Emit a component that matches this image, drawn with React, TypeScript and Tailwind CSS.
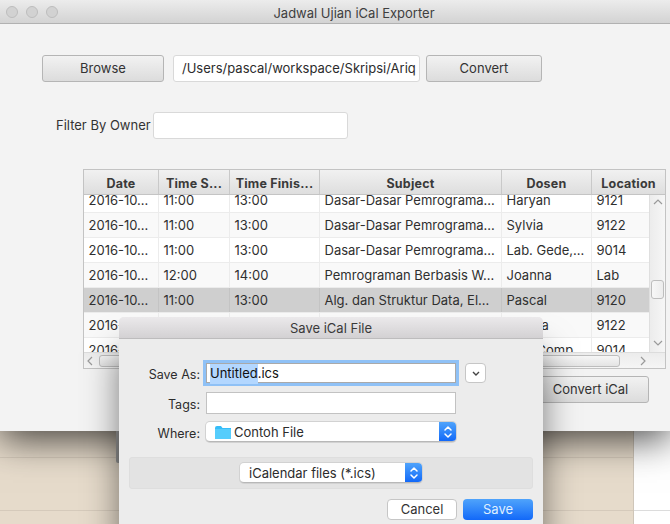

const font = "font-['Inter','Liberation_Sans',sans-serif]";

type Row = { c: string[]; cls: string };
const rows: Row[] = [
  { c: ["2016-10...", "11:00", "13:00", "Dasar-Dasar Pemrograma...", "Haryan", "9121"], cls: "bg-white" },
  { c: ["2016-10...", "11:00", "13:00", "Dasar-Dasar Pemrograma...", "Sylvia", "9122"], cls: "bg-[#f9f9f9]" },
  { c: ["2016-10...", "11:00", "13:00", "Dasar-Dasar Pemrograma...", "Lab. Gede,...", "9014"], cls: "bg-white" },
  { c: ["2016-10...", "12:00", "14:00", "Pemrograman Berbasis W...", "Joanna", "Lab"], cls: "bg-[#f9f9f9]" },
  { c: ["2016-10...", "11:00", "13:00", "Alg. dan Struktur Data, El...", "Pascal", "9120"], cls: "bg-[#cfcfcf]" },
  { c: ["2016-10...", "11:00", "13:00", "Alg. dan Struktur Data, El...", "Natalia", "9122"], cls: "bg-[#f9f9f9]" },
  { c: ["2016-10...", "11:00", "13:00", "Dasar-Dasar Pemrograma...", "Lab. Comp", "9014"], cls: "bg-white" },
];
const widths = ["w-[75px]", "w-[71px]", "w-[90px]", "w-[182px]", "w-[90px]", "w-[57px]"];
const headW = ["w-[75px]", "w-[71px]", "w-[90px]", "w-[182px]", "w-[90px]", "w-[73px]"];
const heads = ["Date", "Time S...", "Time Finis...", "Subject", "Dosen", "Location"];

function Btn({ label, cls }: { label: string; cls: string }) {
  return (
    <button className={`flex h-[27px] items-center justify-center rounded-[3px] border border-[#b5b5b5] bg-gradient-to-b from-[#f2f2f2] to-[#dcdcdc] text-[13px] text-[#333] ${cls}`}>
      {label}
    </button>
  );
}

function Stepper() {
  return (
    <svg width="10" height="14" viewBox="0 0 10 14" fill="none" stroke="white" strokeWidth="1.5" strokeLinecap="round" strokeLinejoin="round">
      <path d="M2 5 L5 2 L8 5" />
      <path d="M2 9 L5 12 L8 9" />
    </svg>
  );
}

function Popup({ w, children }: { w: string; children: React.ReactNode }) {
  return (
    <div className={`flex h-[20px] items-stretch overflow-hidden rounded-[4px] border-b border-[#b8b8b8] bg-white shadow-[0_0_0_1px_#d2d2d2] ${w}`}>
      <div className="flex min-w-0 flex-1 items-center gap-[3px] pl-[9px] pt-[3px] text-[13px] text-[#2c2c2c]">{children}</div>
      <div className="flex w-[17px] items-center justify-center bg-gradient-to-b from-[#4fa3fb] to-[#1268f8]">
        <Stepper />
      </div>
    </div>
  );
}

function Header() {
  return (
    <div className="flex h-[25px] shrink-0 border-b border-[#c4c4c4] bg-gradient-to-b from-[#f1f1f1] to-[#dedede]">
      {heads.map((h, i) => (
        <div key={h} className={`flex shrink-0 items-center justify-center border-r border-[#c9c9c9] pt-[5px] text-[12.5px] font-bold tracking-[0.2px] text-[#3a3a3a] last:border-r-0 ${headW[i]}`}>
          {h}
        </div>
      ))}
    </div>
  );
}

function Table() {
  return (
    <div className="ml-[83px] mt-[30px] flex h-[200px] w-[583px] flex-col border border-[#c3c3c3] bg-white">
      <Header />
      <div className="flex h-[157px] shrink-0">
        <div className="h-full w-[565px] overflow-hidden">
          <div className="-mt-[7px]">
            {rows.map((r, i) => (
              <div key={i} className={`flex h-[25px] border-b border-[#ececec] text-[13px] text-[#2f2f2f] ${r.cls}`}>
                {r.c.map((t, j) => (
                  <div key={j} className={`flex shrink-0 items-center whitespace-nowrap border-r pl-[4.5px] pt-[2px] last:border-r-0 ${widths[j]} ${r.cls === "bg-[#cfcfcf]" ? "border-[#c4c4c4]" : "border-[#ececec]"}`}>
                    {t}
                  </div>
                ))}
              </div>
            ))}
          </div>
        </div>
        <div className="relative flex w-[16px] shrink-0 flex-col items-center justify-between border-l border-[#dfdfdf] bg-gradient-to-r from-[#ececec] to-[#f6f6f6] pb-[6px] pt-[4px]">
          <svg width="10" height="6" viewBox="0 0 10 6" fill="none" stroke="#9a9a9a" strokeWidth="1.2"><path d="M1 5 L5 1 L9 5" /></svg>
          <div className="absolute left-[1px] top-[85px] h-[19px] w-[13px] rounded-[3px] border border-[#bdbdbd] bg-gradient-to-r from-[#f7f7f7] to-[#ececec]" />
          <svg width="10" height="6" viewBox="0 0 10 6" fill="none" stroke="#9a9a9a" strokeWidth="1.2"><path d="M1 1 L5 5 L9 1" /></svg>
        </div>
      </div>
      <div className="flex h-[16px] flex-1 items-center justify-between border-t border-[#dcdcdc] bg-gradient-to-b from-[#ececec] to-[#f5f5f5] pl-[3px] pr-[19px]">
        <svg width="6" height="10" viewBox="0 0 6 10" fill="none" stroke="#9a9a9a" strokeWidth="1.2"><path d="M5 1 L1 5 L5 9" /></svg>
        <div className="ml-[6px] h-[12px] flex-1 rounded-[3px] border border-[#bdbdbd] bg-gradient-to-b from-[#f6f6f6] to-[#e4e4e4]" />
        <svg className="ml-[20px]" width="6" height="10" viewBox="0 0 6 10" fill="none" stroke="#9a9a9a" strokeWidth="1.2"><path d="M1 1 L5 5 L1 9" /></svg>
      </div>
    </div>
  );
}

function Sheet() {
  const label = "w-[81px] pt-[4px] text-right text-[12.5px] text-[#2c2c2c]";
  return (
    <div className="absolute left-[119px] top-[317px] flex h-[207px] w-[424px] flex-col rounded-t-[5px] bg-[#ececec] shadow-[0_34px_34px_rgba(0,0,0,0.5)]">
      <div className="flex h-[22px] shrink-0 items-center justify-center rounded-t-[5px] border-b border-[#bdbcbd] bg-gradient-to-b from-[#ebe9eb] to-[#d3d1d3] pt-[3px] text-[13px] text-[#3a3a3a]">
        Save iCal File
      </div>
      <div className="flex flex-col">
        <div className="mt-[24px] flex h-[20px] items-center">
          <div className={label}>Save As:</div>
          <div className="ml-[6px] flex h-[20px] w-[250px] items-center border border-[#a9a9a9] bg-white pl-[3px] pt-[2px] text-[13px] text-[#111] shadow-[0_0_0_3px_#8fc1f6]">
            <span className="bg-[#b3d7ff]">Untitled</span>.ics
          </div>
          <div className="ml-[9px] flex h-[20px] w-[21px] items-center justify-center rounded-[4px] border border-[#c6c6c6] bg-white">
            <svg width="8" height="5" viewBox="0 0 8 5" fill="none" stroke="#444" strokeWidth="1.4"><path d="M1 1 L4 4 L7 1" /></svg>
          </div>
        </div>
        <div className="mt-[9px] flex h-[22px] items-center">
          <div className={label}>Tags:</div>
          <div className="ml-[6px] h-[22px] w-[250px] border border-[#c2c2c2] bg-white" />
        </div>
        <div className="mt-[8px] flex h-[20px] items-center">
          <div className={label}>Where:</div>
          <div className="ml-[6px]">
            <Popup w="w-[250px]">
              <svg width="16" height="13" viewBox="0 0 16 13" className="-mt-[2px] shrink-0">
                <path d="M0 2 Q0 0 2 0 L6 0 L7.5 2 L16 2 L16 13 L0 13 Z" fill="#36bdf9" />
                <rect x="0" y="3" width="16" height="10" fill="#56cdfc" />
              </svg>
              <span>Contoh File</span>
            </Popup>
          </div>
        </div>
        <div className="ml-[10px] mt-[15px] flex h-[32px] w-[404px] items-center justify-center rounded-[3px] border border-[#dedede] bg-[#e3e3e3]">
          <Popup w="w-[182px]">
            <span className="whitespace-nowrap">iCalendar files (*.ics)</span>
          </Popup>
        </div>
        <div className="mr-[10px] mt-[10px] flex justify-end gap-[6px]">
          <div className="flex h-[21px] w-[70px] items-center justify-center rounded-[4px] border border-[#c6c6c6] bg-white pt-[1px] text-[13px] text-[#333]">Cancel</div>
          <div className="flex h-[21px] w-[70px] items-center justify-center rounded-[4px] bg-gradient-to-b from-[#4fa3fb] to-[#1268f8] pt-[1px] text-[13px] text-[#dfeeff]">Save</div>
        </div>
      </div>
    </div>
  );
}

export default function App() {
  return (
    <div className={`relative h-[524px] w-[670px] overflow-hidden bg-[#e6dbcb] ${font}`}>
      <div className="absolute inset-0 flex">
        <div className="flex w-[633px] flex-col">
          <div className="h-[458px] border-b border-[#d5cabb]" />
          <div className="h-[53px] border-b border-[#d5cabb]" />
        </div>
        <div className="flex flex-1 flex-col border-l border-[#cfc6b9] bg-white">
          <div className="h-[511px] border-b border-[#dcdcdc]" />
        </div>
      </div>

      <div className="absolute left-0 top-0 flex h-[431px] w-[670px] flex-col bg-[#f3f3f3] shadow-[0_8px_36px_rgba(0,0,0,0.72)]">
        <div className="relative flex h-[24px] shrink-0 items-center justify-center border-b border-[#b1b1b1] bg-gradient-to-b from-[#ececec] to-[#d3d3d3] pl-[38px] pt-[4px] text-[13px] text-[#3f3f3f]">
          <div className="absolute left-[6px] top-[6px] flex gap-[8px]">
            <div className="h-[12px] w-[12px] rounded-full border border-[#bdbdbd] bg-[#d2d2d2]" />
            <div className="h-[12px] w-[12px] rounded-full border border-[#bdbdbd] bg-[#d2d2d2]" />
            <div className="h-[12px] w-[12px] rounded-full border border-[#bdbdbd] bg-[#d2d2d2]" />
          </div>
          Jadwal Ujian iCal Exporter
        </div>

        <div className="ml-[42px] mt-[31px] flex items-center">
          <Btn label="Browse" cls="w-[122px]" />
          <div className="ml-[9px] flex h-[27px] w-[247px] items-center overflow-hidden whitespace-nowrap rounded-[3px] border border-[#d9d9d9] bg-white pl-[8px] text-[13px] text-[#2c2c2c]">
            /Users/pascal/workspace/Skripsi/Ariq
          </div>
          <Btn label="Convert" cls="ml-[6px] w-[116px]" />
        </div>

        <div className="ml-[56px] mt-[30px] flex items-center">
          <div className="text-[13px] text-[#333]">Filter By Owner</div>
          <div className="ml-auto mr-[322px] h-[27px] w-[195px] rounded-[3px] border border-[#d9d9d9] bg-white" />
        </div>

        <Table />

        <div className="mr-[21px] mt-[7px] flex justify-end">
          <Btn label="Convert iCal" cls="w-[117px]" />
        </div>
      </div>

      <div className="absolute left-[116px] top-[431px] h-[32px] w-[3px] rounded-bl-[2px] bg-[#8f8f8f]" />
      <Sheet />
    </div>
  );
}
